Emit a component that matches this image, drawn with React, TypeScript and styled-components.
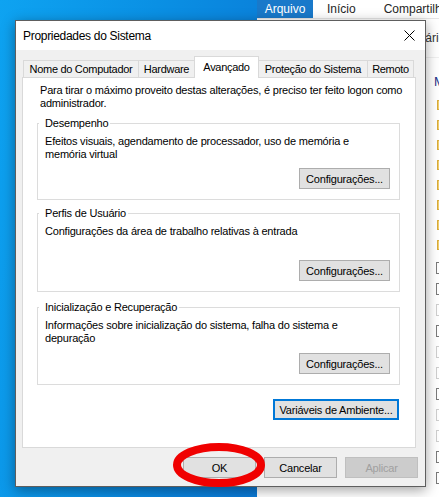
import React from "react";
import styled, { createGlobalStyle } from "styled-components";

const Global = createGlobalStyle`
  html, body { margin: 0; padding: 0; }
  body {
    width: 439px;
    height: 497px;
    overflow: hidden;
    font-family: "Liberation Sans", Arial, sans-serif;
    -webkit-font-smoothing: antialiased;
  }
`;

const Desktop = styled.div`
  position: relative;
  width: 439px;
  height: 497px;
  overflow: hidden;
  background: linear-gradient(100deg, #0ea3f1 0%, #0a90e4 30%, #0a7ad6 62%, #0a6fcf 100%);
`;

/* ---------- Explorer window behind ---------- */

const Explorer = styled.div`
  position: absolute;
  left: 257px;
  top: 0;
  width: 230px;
  height: 520px;
  background: #ffffff;
  display: flex;
  flex-direction: column;
  font-size: 12px;
  color: #1e1e1e;
`;

const RibbonTabs = styled.div`
  height: 18px;
  display: flex;
  align-items: stretch;
  background: #ffffff;
`;

const RibbonTab = styled.div<{ $file?: boolean }>`
  display: flex;
  align-items: center;
  justify-content: center;
  padding: ${(p) => (p.$file ? "0 8px" : "0 14px")};
  width: ${(p) => (p.$file ? "56px" : "auto")};
  box-sizing: border-box;
  background: ${(p) => (p.$file ? "#1979ca" : "transparent")};
  color: ${(p) => (p.$file ? "#ffffff" : "#262626")};
  white-space: nowrap;
`;

const AddressRow = styled.div`
  height: 38px;
  display: flex;
  align-items: center;
  padding-left: 147px;
  border-top: 1px solid #e6e6e6;
  border-bottom: 1px solid #f0f0f0;
  color: #333333;
  white-space: nowrap;
`;

const ContentPane = styled.div`
  display: flex;
  flex-direction: column;
  padding: 15px 0 0 177px;
`;

const GroupHead = styled.div`
  color: #1e3287;
  font-size: 13px;
  height: 18px;
  line-height: 18px;
  white-space: nowrap;
`;

const FolderList = styled.div`
  display: flex;
  flex-direction: column;
  gap: 10px;
  padding: 9px 0 0 3px;
`;

const Folder = styled.div`
  width: 14px;
  height: 10px;
  background: #f2cf6b;
  border: 1px solid #d9ad3c;
  box-sizing: border-box;
`;

const CheckList = styled.div`
  display: flex;
  flex-direction: column;
  gap: 9px;
  padding: 12px 0 0 2px;
`;

const Check = styled.div<{ $dark?: boolean }>`
  width: 13px;
  height: 12px;
  box-sizing: border-box;
  border: 1px solid ${(p) => (p.$dark ? "#7a7a7a" : "#cfcfcf")};
  font-size: 9px;
  line-height: 10px;
  padding-left: 1px;
  color: #444;
`;

/* ---------- Dialog ---------- */

const Dialog = styled.div`
  position: absolute;
  left: 15px;
  top: 20px;
  width: 411px;
  height: 467px;
  box-sizing: border-box;
  border: 1px solid #5e5e5e;
  background: #f0f0f0;
  box-shadow: 0 3px 12px rgba(0, 0, 0, 0.38);
  display: flex;
  flex-direction: column;
  color: #000;
`;

const TitleBar = styled.div`
  height: 29px;
  flex: none;
  background: #ffffff;
  display: flex;
  align-items: center;
  justify-content: space-between;
  padding-left: 7px;
`;

const Title = styled.div`
  font-size: 12px;
  letter-spacing: -0.3px;
  padding-top: 1px;
`;

const CloseBox = styled.div`
  width: 32px;
  height: 29px;
  display: flex;
  align-items: center;
  justify-content: center;
`;

const Body = styled.div`
  flex: 1;
  display: flex;
  flex-direction: column;
  padding: 6px 9px 0 6px;
  font-size: 11px;
  letter-spacing: -0.2px;
`;

const TabStrip = styled.div`
  height: 21px;
  display: flex;
  align-items: flex-end;
  padding-left: 1px;
  position: relative;
  z-index: 1;
`;

const Tab = styled.div<{ $w: number; $active?: boolean }>`
  width: ${(p) => p.$w}px;
  height: ${(p) => (p.$active ? 22 : 17)}px;
  margin-left: -1px;
  margin-bottom: ${(p) => (p.$active ? -1 : 0)}px;
  box-sizing: border-box;
  border: 1px solid #d9d9d9;
  border-bottom: none;
  background: ${(p) => (p.$active ? "#ffffff" : "#f0f0f0")};
  position: relative;
  z-index: ${(p) => (p.$active ? 2 : 1)};
  display: flex;
  align-items: center;
  justify-content: center;
  padding-bottom: ${(p) => (p.$active ? 2 : 0)}px;
  white-space: nowrap;
  font-size: 11px;
  letter-spacing: -0.3px;
  &:first-child { margin-left: 0; }
`;

const Panel = styled.div`
  height: 371px;
  box-sizing: border-box;
  background: #ffffff;
  border: 1px solid #d9d9d9;
  display: flex;
  flex-direction: column;
  padding: 6px 15px 0 14px;
`;

const Intro = styled.div`
  line-height: 13px;
  padding-left: 3px;
  white-space: nowrap;
`;

const Group = styled.fieldset<{ $h: number; $top: number }>`
  margin: ${(p) => p.$top}px 0 0 0;
  height: ${(p) => p.$h}px;
  box-sizing: border-box;
  border: 1px solid #dcdcdc;
  padding: 0;
  min-width: 0;
`;

const Legend = styled.legend`
  margin-left: 1px;
  padding: 0 2px 0 6px;
  line-height: 13px;
  font-size: 11px;
`;

const GroupBody = styled.div<{ $h: number }>`
  height: ${(p) => p.$h}px;
  box-sizing: border-box;
  display: flex;
  flex-direction: column;
  padding: 5px 9px 10px 7px;
`;

const GroupText = styled.div`
  line-height: 13px;
  white-space: nowrap;
`;

const Button = styled.button<{ $w: number; $focus?: boolean; $disabled?: boolean }>`
  width: ${(p) => p.$w}px;
  height: 21px;
  box-sizing: border-box;
  font-family: "Liberation Sans", Arial, sans-serif;
  font-size: 11px;
  letter-spacing: -0.2px;
  padding: 0;
  background: ${(p) => (p.$disabled ? "#cccccc" : "#e1e1e1")};
  color: ${(p) => (p.$disabled ? "#a0a0a0" : "#000000")};
  border: ${(p) =>
    p.$focus ? "2px solid #0078d7" : p.$disabled ? "1px solid #bfbfbf" : "1px solid #adadad"};
  border-radius: 0;
  cursor: default;
`;

const GroupButton = styled(Button)`
  margin-top: auto;
  align-self: flex-end;
`;

const EnvRow = styled.div`
  display: flex;
  justify-content: flex-end;
  margin-top: 14px;
  padding-right: 1px;
`;

const Footer = styled.div`
  display: flex;
  justify-content: flex-end;
  gap: 8px;
  padding: 9px 0 0 0;
  margin-right: -2px;
`;

const Marker = styled.svg`
  position: absolute;
  left: 172px;
  top: 443px;
  width: 94px;
  height: 44px;
  overflow: visible;
  pointer-events: none;
`;

const checks: { dark?: boolean; checked?: boolean }[] = [
  { dark: true },
  { dark: true },
  {},
  { dark: true },
  {},
  {},
  { dark: true },
  {},
  {},
  { dark: true, checked: true },
  { dark: true },
];

type GroupDef = { title: string; lines: string[]; h: number; top: number };

const groups: GroupDef[] = [
  {
    title: "Desempenho",
    lines: ["Efeitos visuais, agendamento de processador, uso de memória e", "memória virtual"],
    h: 83,
    top: 7,
  },
  {
    title: "Perfis de Usuário",
    lines: ["Configurações da área de trabalho relativas à entrada"],
    h: 85,
    top: 7,
  },
  {
    title: "Inicialização e Recuperação",
    lines: ["Informações sobre inicialização do sistema, falha do sistema e", "depuração"],
    h: 84,
    top: 9,
  },
];

export default function App() {
  return (
    <>
      <Global />
      <Desktop>
        <Explorer>
          <RibbonTabs>
            <RibbonTab $file>Arquivo</RibbonTab>
            <RibbonTab>Início</RibbonTab>
            <RibbonTab>Compartilhar</RibbonTab>
          </RibbonTabs>
          <AddressRow>Usuário</AddressRow>
          <ContentPane>
            <GroupHead>M</GroupHead>
            <FolderList>
              {Array.from({ length: 8 }).map((_, i) => (
                <Folder key={i} />
              ))}
            </FolderList>
            <CheckList>
              {checks.map((c, i) => (
                <Check key={i} $dark={c.dark}>
                  {c.checked ? "✓" : ""}
                </Check>
              ))}
            </CheckList>
          </ContentPane>
        </Explorer>

        <Dialog>
          <TitleBar>
            <Title>Propriedades do Sistema</Title>
            <CloseBox>
              <svg width="11" height="11" viewBox="0 0 11 11">
                <path d="M0.5 0.5 L10.5 10.5 M10.5 0.5 L0.5 10.5" stroke="#000" strokeWidth="1" fill="none" />
              </svg>
            </CloseBox>
          </TitleBar>
          <Body>
            <TabStrip>
              <Tab $w={116}>Nome do Computador</Tab>
              <Tab $w={57}>Hardware</Tab>
              <Tab $w={65} $active>
                Avançado
              </Tab>
              <Tab $w={110}>Proteção do Sistema</Tab>
              <Tab $w={47}>Remoto</Tab>
            </TabStrip>
            <Panel>
              <Intro>
                Para tirar o máximo proveito destas alterações, é preciso ter feito logon como
                <br />
                administrador.
              </Intro>
              {groups.map((g) => (
                <Group key={g.title} $h={g.h} $top={g.top}>
                  <Legend>{g.title}</Legend>
                  <GroupBody $h={g.h - 14}>
                    <GroupText>
                      {g.lines.map((l, i) => (
                        <div key={i}>{l}</div>
                      ))}
                    </GroupText>
                    <GroupButton $w={91}>Configurações...</GroupButton>
                  </GroupBody>
                </Group>
              ))}
              <EnvRow>
                <Button $w={126} $focus>
                  Variáveis de Ambiente...
                </Button>
              </EnvRow>
            </Panel>
            <Footer>
              <Button $w={73}>OK</Button>
              <Button $w={73}>Cancelar</Button>
              <Button $w={73} $disabled>
                Aplicar
              </Button>
            </Footer>
          </Body>
        </Dialog>

        <Marker viewBox="0 0 94 44">
          <ellipse cx="47" cy="22" rx="42" ry="18" fill="none" stroke="#f00000" strokeWidth="8" />
        </Marker>
      </Desktop>
    </>
  );
}
